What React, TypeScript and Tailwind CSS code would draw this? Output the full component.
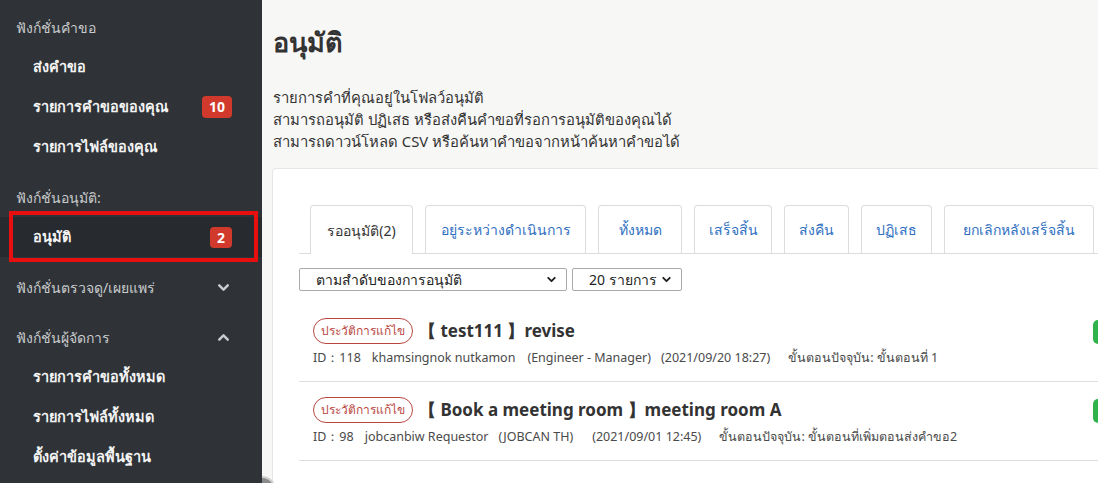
import { ChevronDown, ChevronUp } from "lucide-react";

const font = { fontFamily: '"Noto Sans", "Open Sans", sans-serif' };

type NavItem = { label: string; badge?: string; active?: boolean };
type NavSection = { title: string; chevron?: "up" | "down"; items: NavItem[] };

const sections: NavSection[] = [
  {
    title: "ฟังก์ชั่นคำขอ",
    items: [
      { label: "ส่งคำขอ" },
      { label: "รายการคำขอของคุณ", badge: "10" },
      { label: "รายการไฟล์ของคุณ" },
    ],
  },
  {
    title: "ฟังก์ชั่นอนุมัติ:",
    items: [{ label: "อนุมัติ", badge: "2", active: true }],
  },
  { title: "ฟังก์ชั่นตรวจดู/เผยแพร่", chevron: "down", items: [] },
  {
    title: "ฟังก์ชั่นผู้จัดการ",
    chevron: "up",
    items: [
      { label: "รายการคำขอทั้งหมด" },
      { label: "รายการไฟล์ทั้งหมด" },
      { label: "ตั้งค่าข้อมูลพื้นฐาน" },
    ],
  },
];

const tabs = [
  { label: "รออนุมัติ(2)", w: "w-[103px]", active: true },
  { label: "อยู่ระหว่างดำเนินการ", w: "w-[161px]" },
  { label: "ทั้งหมด", w: "w-[84px]" },
  { label: "เสร็จสิ้น", w: "w-[78px]" },
  { label: "ส่งคืน", w: "w-[65px]" },
  { label: "ปฏิเสธ", w: "w-[71px]" },
  { label: "ยกเลิกหลังเสร็จสิ้น", w: "w-[150px]" },
];

// gap before each meta piece, measured from the screenshot
const requests = [
  {
    title: "【 test111 】revise",
    meta: [
      { text: "ID：118", gap: 0 },
      { text: "khamsingnok nutkamon", gap: 11 },
      { text: "(Engineer - Manager)", gap: 12 },
      { text: "(2021/09/20 18:27)", gap: 10 },
      { text: "ขั้นตอนปัจจุบัน: ขั้นตอนที่ 1", gap: 18 },
    ],
  },
  {
    title: "【 Book a meeting room 】meeting room A",
    meta: [
      { text: "ID：98", gap: 0 },
      { text: "jobcanbiw Requestor", gap: 11 },
      { text: "(JOBCAN TH)", gap: 10 },
      { text: "(2021/09/01 12:45)", gap: 19 },
      { text: "ขั้นตอนปัจจุบัน: ขั้นตอนที่เพิ่มตอนส่งคำขอ2", gap: 18 },
    ],
  },
];

function Sidebar() {
  return (
    <aside className="w-[262px] shrink-0 h-[483px] bg-[#2f3337] pt-[7px] overflow-hidden">
      {sections.map((s) => (
        <div key={s.title} className="mb-[10px]">
          <div className="h-[40px] pl-[16px] pr-[30px] flex items-center justify-between text-[14px] text-[#c9cbcd]">
            <span>{s.title}</span>
            {s.chevron === "down" && <ChevronDown className="w-[17px] h-[17px] text-[#c9cbcd]" strokeWidth={3.5} />}
            {s.chevron === "up" && <ChevronUp className="w-[17px] h-[17px] text-[#c9cbcd]" strokeWidth={3.5} />}
          </div>
          {s.items.map((it) =>
            it.active ? (
              <div key={it.label} className="relative h-[40px] bg-[#272a2e] flex items-center justify-between pl-[33px] pr-[30px]">
                <span className="text-[14.5px] font-semibold text-[#f4f4f4]">{it.label}</span>
                <span className="bg-[#d0392b] text-white text-[14px] font-bold rounded-[4px] px-[7px] h-[21px] leading-[21px]">
                  {it.badge}
                </span>
                <div className="absolute left-[9px] right-[4px] -top-[6px] -bottom-[5px] border-[4px] border-[#e8100e]" />
              </div>
            ) : (
              <div key={it.label} className="h-[40px] flex items-center justify-between pl-[33px] pr-[30px]">
                <span className="text-[14.5px] font-semibold text-[#f4f4f4]">{it.label}</span>
                {it.badge && (
                  <span className="bg-[#d0392b] text-white text-[14px] font-bold rounded-[4px] px-[7px] h-[22px] leading-[22px]">
                    {it.badge}
                  </span>
                )}
              </div>
            )
          )}
        </div>
      ))}
    </aside>
  );
}

function SelectBox({ label, w }: { label: string; w: string }) {
  return (
    <div className={`${w} h-[23px] border border-[#a9a9a9] rounded-[2px] bg-white flex items-center justify-between pl-[16px] pr-[8px] text-[14px] text-[#222]`}>
      <span>{label}</span>
      <ChevronDown className="w-[13px] h-[13px] text-[#222]" strokeWidth={3.5} />
    </div>
  );
}

export default function App() {
  return (
    <div className="w-[1098px] h-[483px] flex overflow-hidden bg-[#f7f7f6]" style={font}>
      <Sidebar />
      <main className="flex-1 min-w-0 pl-[10px] overflow-hidden relative">
        <h1 className="text-[27px] font-bold text-[#333] pt-[22px] leading-[40px] pl-[1px]">อนุมัติ</h1>
        <div className="mt-[24px] text-[14.8px] leading-[22px] text-[#333] pl-[1px]">
          <p>รายการคำที่คุณอยู่ในโฟลว์อนุมัติ</p>
          <p>สามารถอนุมัติ ปฏิเสธ หรือส่งคืนคำขอที่รอการอนุมัติของคุณได้</p>
          <p>สามารถดาวน์โหลด CSV หรือค้นหาคำขอจากหน้าค้นหาคำขอได้</p>
        </div>
        <section className="mt-[16px] w-[900px] h-[330px] bg-white border-t border-l border-[#e6e6e6] rounded-tl-[4px] pt-[36px] pl-[26px]">
          <div className="w-[854px]">
            <div className="flex gap-[12px] pl-[11px] border-b border-[#dcdcdc]">
              {tabs.map((t) =>
                t.active ? (
                  <div
                    key={t.label}
                    className={`${t.w} h-[49px] -mb-px shrink-0 bg-white border border-b-0 border-[#dcdcdc] rounded-t-[4px] flex items-center justify-center text-[14px] text-[#333]`}
                  >
                    {t.label}
                  </div>
                ) : (
                  <div
                    key={t.label}
                    className={`${t.w} h-[48px] shrink-0 border border-b-0 border-[#dcdcdc] rounded-t-[4px] flex items-center justify-center text-[14px] text-[#2f6fbf]`}
                  >
                    {t.label}
                  </div>
                )
              )}
            </div>
            <div className="flex gap-[5px] mt-[14px]">
              <SelectBox label="ตามสำดับของการอนุมัติ" w="w-[268px]" />
              <SelectBox label="20 รายการ" w="w-[110px]" />
            </div>
            <div className="mt-[12px]">
              {requests.map((r) => (
                <div key={r.title} className="flex justify-between border-b border-[#dedede] pt-[15px] pb-[14px] pl-[14px]">
                  <div>
                    <div className="flex items-center gap-[6px]">
                      <span className="h-[26px] px-[7px] border border-[#b9473f] rounded-full text-[12px] text-[#b9473f] flex items-center shrink-0">
                        ประวัติการแก้ไข
                      </span>
                      <span className="text-[17px] font-bold text-[#333]">{r.title}</span>
                    </div>
                    <div className="mt-[5px] flex leading-[18px] text-[12.5px] text-[#4a4a4a]">
                      {r.meta.map((m, i) => (
                        <span key={i} style={{ marginLeft: m.gap }}>
                          {m.text}
                        </span>
                      ))}
                    </div>
                  </div>
                  <div className="w-[60px] h-[24px] bg-[#2fb34a] rounded-[5px] mt-[2px]" />
                </div>
              ))}
            </div>
          </div>
        </section>
        <div className="absolute -left-[14px] top-[476px] w-[28px] h-[28px] rounded-full bg-[#8a8a8a] border-2 border-[#d0d0d0]" />
      </main>
    </div>
  );
}
